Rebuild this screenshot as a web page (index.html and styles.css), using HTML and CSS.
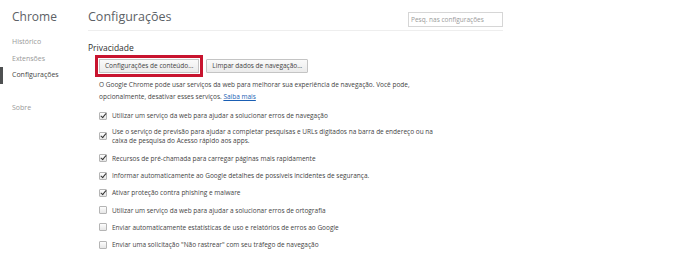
FILE: index.html
```html
<!DOCTYPE html>
<html>
<head>
    <meta charset="utf-8">
    <title>Configurações</title>
    <link rel="stylesheet" href="styles.css">
</head>
<body>
<div class="page">
    <div class="sidebar">
        <h1 class="brand">Chrome</h1>
        <ul class="nav">
            <li class="nav-item">Histórico</li>
            <li class="nav-item">Extensões</li>
            <li class="nav-item active">Configurações</li>
            <li class="nav-item about">Sobre</li>
        </ul>
    </div>

    <div class="main">
        <div class="header">
            <h1 class="title">Configurações</h1>
            <input class="search" type="text" placeholder="Pesq. nas configurações">
        </div>

        <div class="section">
            <h3 class="section-title">Privacidade</h3>
            <div class="section-body">
                <div class="buttons">
                    <button class="btn highlighted">Configurações de conteúdo...</button>
                    <button class="btn">Limpar dados de navegação...</button>
                </div>

                <p class="intro">O Google Chrome pode usar serviços da web para melhorar sua experiência de navegação. Você pode,<br>opcionalmente, desativar esses serviços. <a href="#">Saiba mais</a></p>

                <div class="option"><span class="check on"></span><span>Utilizar um serviço da web para ajudar a solucionar erros de navegação</span></div>
                <div class="option multi"><span class="check on"></span><span>Use o serviço de previsão para ajudar a completar pesquisas e URLs digitados na barra de endereço ou na<br>caixa de pesquisa do Acesso rápido aos apps.</span></div>
                <div class="option"><span class="check on"></span><span>Recursos de pré-chamada para carregar páginas mais rapidamente</span></div>
                <div class="option"><span class="check on"></span><span>Informar automaticamente ao Google detalhes de possíveis incidentes de segurança.</span></div>
                <div class="option"><span class="check on"></span><span>Ativar proteção contra phishing e malware</span></div>
                <div class="option"><span class="check"></span><span>Utilizar um serviço da web para ajudar a solucionar erros de ortografia</span></div>
                <div class="option"><span class="check"></span><span>Enviar automaticamente estatísticas de uso e relatórios de erros ao Google</span></div>
                <div class="option"><span class="check"></span><span>Enviar uma solicitação "Não rastrear" com seu tráfego de navegação</span></div>
            </div>
        </div>
    </div>
</div>
</body>
</html>
```

FILE: styles.css
```css
body {
    margin: 0;
    background-color: #ffffff;
    font-family: "Open Sans", "Noto Sans", sans-serif;
    color: #333333;
}

.page {
    display: flex;
}

.sidebar {
    width: 88px;
    flex-shrink: 0;
}

.brand {
    margin: 9px 0 0 12px;
    font-size: 12px;
    font-weight: normal;
    color: #5c6166;
    line-height: 16px;
}

.nav {
    list-style: none;
    margin: 9px 0 0 0;
    padding: 0;
}

.nav-item {
    font-size: 7px;
    line-height: 16.5px;
    color: #999999;
    padding-left: 12px;
    border-left: 3px solid transparent;
    margin-left: -3px;
}

.nav-item.active {
    color: #464646;
    border-left-color: #4e5051;
    margin-left: 0;
    padding-left: 9px;
}

.nav-item.about {
    margin-top: 16px;
}

.main {
    width: 415px;
}

.header {
    display: flex;
    justify-content: space-between;
    align-items: flex-start;
    border-bottom: 1px solid #eeeeee;
    height: 30px;
}

.title {
    margin: 9px 0 0 0;
    font-size: 12.5px;
    font-weight: normal;
    color: #5c6166;
    line-height: 16px;
}

.search {
    margin: 12px 0 0 0;
    width: 91px;
    height: 13px;
    padding: 0 0 0 2px;
    border: 1px solid #d6d6d6;
    font-family: inherit;
    font-size: 6.5px;
    color: #333;
}

.search::placeholder {
    color: #9a9a9a;
}

.section-title {
    margin: 11px 0 0 0;
    font-size: 8.5px;
    font-weight: normal;
    color: #303030;
    line-height: 12px;
}

.section-body {
    padding-left: 11px;
}

.buttons {
    display: flex;
    gap: 7px;
    margin-top: 5px;
}

.btn {
    height: 14px;
    padding: 0 5px;
    border: 1px solid #c4c4c4;
    border-radius: 1px;
    background: linear-gradient(#fafafa, #ebebeb);
    font-family: inherit;
    font-size: 6.5px;
    color: #444444;
    line-height: 12px;
    white-space: nowrap;
}

.btn.highlighted {
    outline: 3px solid #c8142f;
    outline-offset: 1px;
    border-radius: 0;
}

.intro {
    margin: 6px 0 7px 0;
    font-size: 6.5px;
    line-height: 12px;
    color: #444444;
}

.intro a {
    color: #1a5fb4;
}

.option {
    display: flex;
    align-items: center;
    gap: 5px;
    font-size: 6.5px;
    line-height: 11px;
    color: #444444;
    margin-bottom: 6.3px;
}

.option.multi {
    line-height: 9px;
    margin-top: 2px;
    margin-bottom: 7.5px;
}

.check {
    width: 6px;
    height: 6px;
    flex-shrink: 0;
    border: 1px solid #b5b5b5;
    border-radius: 1px;
    background: linear-gradient(#fdfdfd, #e6e6e6);
    position: relative;
}

.check.on::after {
    content: "";
    position: absolute;
    left: 2px;
    top: -1px;
    width: 2px;
    height: 5px;
    border-right: 1.5px solid #333;
    border-bottom: 1.5px solid #333;
    transform: rotate(40deg);
}
```
